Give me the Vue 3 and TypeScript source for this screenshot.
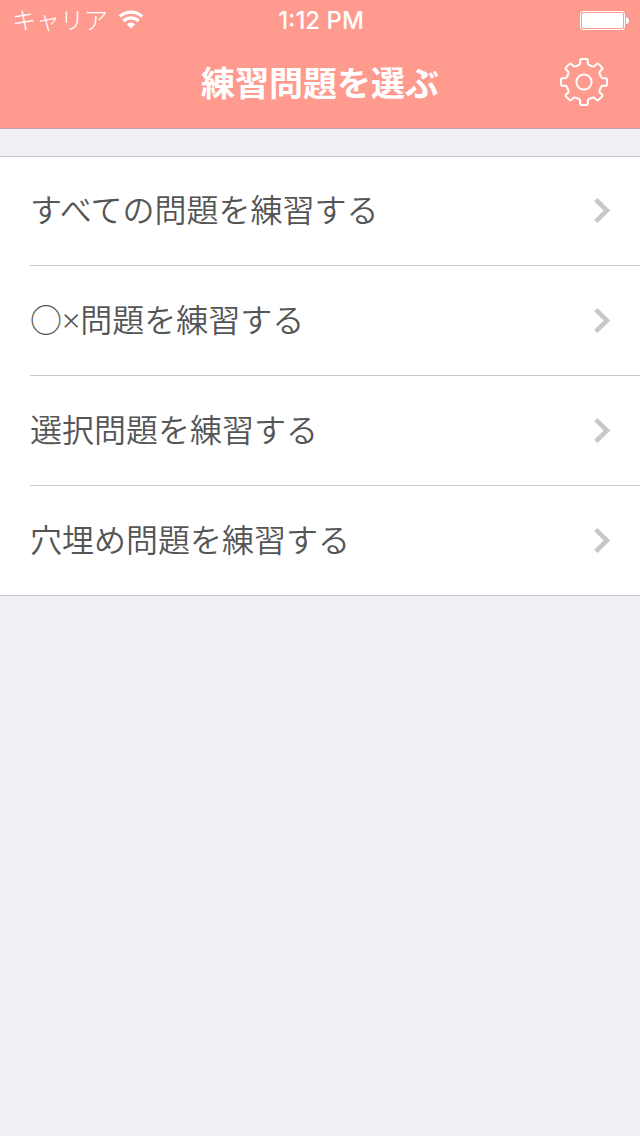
<script setup lang="ts">
interface Practice {
  id: string
  label: string
}

const practices: Practice[] = [
  { id: 'all', label: 'すべての問題を練習する' },
  { id: 'true-false', label: '○×問題を練習する' },
  { id: 'choice', label: '選択問題を練習する' },
  { id: 'fill-in', label: '穴埋め問題を練習する' },
]

// One gear tooth pointing up, repeated eight times around the centre.
function gearPath(): string {
  const parts: string[] = []
  for (let i = 0; i < 8; i++) {
    const a = (i * Math.PI) / 4
    const p = (x: number, y: number): string =>
      `${(x * Math.cos(a) - y * Math.sin(a)).toFixed(2)} ${(x * Math.sin(a) + y * Math.cos(a)).toFixed(2)}`
    parts.push(
      `${i === 0 ? 'M' : 'L'}${p(-5.5, -16.8)}`,
      `Q${p(-3.8, -17.3)} ${p(-3.8, -19)}`,
      `L${p(-3.8, -21.5)}`,
      `Q${p(-3.8, -23)} ${p(-2.3, -23)}`,
      `L${p(2.3, -23)}`,
      `Q${p(3.8, -23)} ${p(3.8, -21.5)}`,
      `L${p(3.8, -19)}`,
      `Q${p(3.8, -17.3)} ${p(5.5, -16.8)}`,
    )
  }
  return parts.join('') + 'Z'
}

const gear = gearPath()
</script>

<template>
  <div class="screen">
    <header class="top">
      <div class="status">
        <div class="carrier">
          <span>キャリア</span>
          <svg class="wifi" width="26" height="20" viewBox="0 0 26 20" aria-hidden="true">
            <path d="M1.800 7.600a16.200 16.200 0 0 1 22.400 0" />
            <path d="M5.400 12a10.800 10.800 0 0 1 15.200 0" />
            <path class="dot" d="M8.800 15.200a6 6 0 0 1 8.400 0L13 19.600z" />
          </svg>
        </div>
        <time class="clock">1:12 PM</time>
        <svg class="battery" width="50" height="20" viewBox="0 0 50 20" aria-hidden="true">
          <rect class="shell" x="0.5" y="0.5" width="44" height="18" rx="2.5" />
          <rect x="2" y="2" width="41" height="15" rx="1.5" />
          <path d="M46 6.500c4 0 4 6.500 0 6.500z" />
        </svg>
      </div>
      <div class="nav">
        <h1 class="title">練習問題を選ぶ</h1>
        <button class="settings" type="button" aria-label="設定">
          <svg width="50" height="50" viewBox="-25 -25 50 50" aria-hidden="true">
            <path :d="gear" />
            <circle r="7.6" />
          </svg>
        </button>
      </div>
    </header>
    <main>
      <ul class="list">
        <li v-for="item in practices" :key="item.id" class="item">
          <a class="link" :href="'#' + item.id">
            <span>{{ item.label }}</span>
            <svg width="18" height="26" viewBox="0 0 18 26" aria-hidden="true">
              <path d="M2.800 2.600L14 13.500L2.800 24.400" />
            </svg>
          </a>
        </li>
      </ul>
    </main>
  </div>
</template>

<style>
body {
  margin: 0;
  background: #efeff4;
}
</style>

<style scoped>
.screen {
  min-height: 100vh;
  background: #efeff4;
  font-family: "Noto Sans", "Noto Sans CJK JP", sans-serif;
  color: #555;
}

.top {
  background: #ff9a8f;
  border-bottom: 1px solid #b9a3a8;
  color: #fff;
}

.status {
  display: grid;
  grid-template-columns: 1fr auto 1fr;
  align-items: center;
  height: 42px;
  padding: 0 10px 0 12px;
}

.carrier {
  display: flex;
  align-items: center;
  align-self: start;
  gap: 10px;
  font-family: "Noto Sans CJK JP", sans-serif;
  font-size: 24px;
  font-weight: 300;
  line-height: 38px;
}

.wifi path {
  fill: none;
  stroke: #fff;
  stroke-width: 3.2;
}

.wifi .dot {
  fill: #fff;
  stroke: none;
}

.clock {
  font-family: Inter, "Liberation Sans", sans-serif;
  font-size: 24px;
  font-weight: 500;
  line-height: 40px;
}

.battery {
  justify-self: end;
  fill: #fff;
}

.battery .shell {
  fill: none;
  stroke: #fff;
  stroke-width: 1;
}

.nav {
  box-sizing: border-box;
  display: grid;
  grid-template-columns: 1fr auto 1fr;
  align-items: center;
  height: 86px;
  padding: 0 31px 6px;
}

.title {
  grid-column: 2;
  margin: 0;
  font-family: "Noto Sans CJK JP", sans-serif;
  font-size: 34px;
  font-weight: 700;
  line-height: 48px;
}

.settings {
  justify-self: end;
  display: flex;
  padding: 0;
  border: 0;
  background: none;
  cursor: pointer;
}

.settings svg {
  fill: none;
  stroke: #fff;
  stroke-width: 2;
  stroke-linejoin: round;
}

.list {
  margin: 27px 0 0;
  padding: 0;
  list-style: none;
  background: #fff;
  border-bottom: 1px solid #c8c7cc;
}

.item {
  box-sizing: border-box;
  height: 110px;
  padding-left: 30px;
}

.item:first-child {
  border-top: 1px solid #c8c7cc;
}

.item:last-child {
  height: 109px;
}

.link {
  box-sizing: border-box;
  display: flex;
  align-items: center;
  justify-content: space-between;
  height: 100%;
  padding: 0 29px 2px 0;
  color: inherit;
  font-size: 32px;
  font-weight: 350;
  line-height: 48px;
  text-decoration: none;
}

.item:not(:last-child) .link {
  border-bottom: 1px solid #c8c7cc;
}

.link svg {
  fill: none;
  stroke: #c7c7cc;
  stroke-width: 4.6;
}
</style>
